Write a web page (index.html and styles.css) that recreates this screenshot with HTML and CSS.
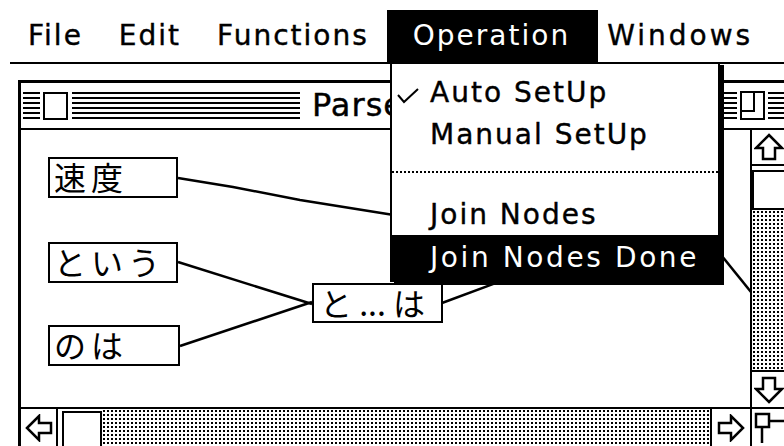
FILE: index.html
```html
<!DOCTYPE html>
<html lang="ja">
<head>
  <meta charset="UTF-8" />
  <meta name="viewport" content="width=device-width, initial-scale=1" />
  <title>Parse Tree</title>
  <link rel="stylesheet" href="styles.css">
</head>
<body>
  <div class="menubar">
    <span class="menu">File</span>
    <span class="menu">Edit</span>
    <span class="menu">Functions</span>
    <span class="menu active">Operation</span>
    <span class="menu last">Windows</span>
  </div>

  <div class="window">
    <div class="titlebar">
      <span class="stripes short"></span>
      <span class="closebox"></span>
      <span class="stripes lead"></span>
      <span class="title">Parse Tree</span>
      <span class="stripes fill"></span>
      <span class="zoombox"></span>
      <span class="stripes tail"></span>
    </div>

    <div class="pane">
      <div class="canvas">
        <!-- viewBox uses page coordinates so the links line up with the nodes -->
        <svg class="links" viewBox="21 130 729 277">
          <polyline points="178,178 233,187 300,200 400,216" />
          <polyline points="178,262 312,304" />
          <polyline points="180,346 312,302" />
          <polyline points="442,303 520,274" />
          <polyline points="700,229 760,303" />
        </svg>
        <div class="node n1">速度</div>
        <div class="node n2">という</div>
        <div class="node n3">のは</div>
        <div class="node n4">と ... は</div>
      </div>

      <div class="vscroll">
        <div class="arrow up">
          <svg width="30" height="28" viewBox="0 0 30 28"><polygon points="15,2 28,15 21,15 21,26 9,26 9,15 2,15" /></svg>
        </div>
        <div class="thumb"></div>
        <div class="track"></div>
        <div class="arrow down">
          <svg width="30" height="28" viewBox="0 0 30 28"><polygon points="15,26 28,13 21,13 21,2 9,2 9,13 2,13" /></svg>
        </div>
      </div>

      <div class="hscroll">
        <div class="arrow left">
          <svg width="28" height="28" viewBox="0 0 28 28"><polygon points="2,14 14,2 14,9 26,9 26,19 14,19 14,26" /></svg>
        </div>
        <div class="thumb"></div>
        <div class="track"></div>
        <div class="arrow right">
          <svg width="28" height="28" viewBox="0 0 28 28"><polygon points="26,14 14,2 14,9 2,9 2,19 14,19 14,26" /></svg>
        </div>
      </div>

      <div class="grow">
        <svg width="32" height="34" viewBox="0 0 32 34"><rect x="10" y="12" width="24" height="24" /><rect x="4" y="5" width="13" height="13" /></svg>
      </div>
    </div>
  </div>

  <div class="dropdown">
    <div class="item">
      <span class="mark"><svg width="22" height="16" viewBox="0 0 22 16"><polyline points="1,7 7,14 21,1" /></svg></span>
      <span>Auto SetUp</span>
    </div>
    <div class="item">
      <span class="mark"></span>
      <span>Manual SetUp</span>
    </div>
    <div class="sep"></div>
    <div class="item">
      <span class="mark"></span>
      <span>Join Nodes</span>
    </div>
    <div class="item hot">
      <span class="mark"></span>
      <span>Join Nodes Done</span>
    </div>
  </div>
</body>
</html>
```

FILE: styles.css
```css
body {
  margin: 0;
  width: 784px;
  height: 446px;
  overflow: hidden;
  position: relative;
  background: #fff;
  color: #000;
  font-family: "DejaVu Sans", sans-serif;
}

/* menu bar */
.menubar {
  display: flex;
  margin-left: 10px;
  padding-top: 10px;
  border-bottom: 2px solid #000;
  font-size: 28px;
  letter-spacing: 2px;
  -webkit-text-stroke: 0.4px #000;
}
.menu {
  height: 52px;
  line-height: 52px;
  padding: 0 18px;
}
.menu.active {
  padding: 0 28px 0 26px;
  background: #000;
  color: #fff;
  -webkit-text-stroke: 0;
}
.menu.last {
  padding-left: 9px;
  letter-spacing: 3px;
}

/* window */
.window {
  position: absolute;
  left: 18px;
  top: 80px;
  width: 771px;
  height: 392px;
  box-sizing: border-box;
  border: 3px solid #000;
  background: #fff;
  overflow: hidden;
}
.titlebar {
  display: flex;
  align-items: center;
  height: 45px;
  border-bottom: 2px solid #000;
}
.stripes {
  height: 28px;
  background: repeating-linear-gradient(#000 0 2px, #fff 2px 5px);
}
.stripes.short {
  width: 17px;
  margin-left: 2px;
}
.stripes.lead {
  width: 228px;
}
.stripes.fill {
  flex: 1;
}
.stripes.tail {
  width: 18px;
}
.closebox {
  width: 25px;
  height: 28px;
  box-sizing: border-box;
  border: 2px solid #000;
  margin: 0 4px 0 3px;
}
.zoombox {
  position: relative;
  width: 25px;
  height: 29px;
  box-sizing: border-box;
  border: 2px solid #000;
  margin: 0 3px;
}
.zoombox::after {
  content: "";
  position: absolute;
  left: 0;
  top: 0;
  width: 11px;
  height: 17px;
  border-right: 2px solid #000;
  border-bottom: 2px solid #000;
}
.title {
  padding: 0 12px;
  font-size: 32px;
  letter-spacing: 1px;
  line-height: 45px;
  -webkit-text-stroke: 0.4px #000;
}

.pane {
  display: grid;
  grid-template-columns: 729px 36px;
  grid-template-rows: 277px 39px;
}

/* tree canvas */
.canvas {
  position: relative;
  overflow: hidden;
}
.links {
  position: absolute;
  left: 0;
  top: 0;
  width: 729px;
  height: 277px;
}
.links polyline {
  fill: none;
  stroke: #000;
  stroke-width: 2.5;
}
.node {
  position: absolute;
  height: 41px;
  box-sizing: border-box;
  border: 2px solid #000;
  background: #fff;
  padding-left: 4px;
  font-family: "Noto Sans CJK JP", sans-serif;
  font-size: 32px;
  line-height: 35px;
  letter-spacing: 5px;
  white-space: nowrap;
}
.n1 { left: 27px; top: 27px; width: 130px; }
.n2 { left: 27px; top: 112px; width: 130px; }
.n3 { left: 27px; top: 195px; width: 132px; }
.n4 { left: 291px; top: 153px; width: 131px; height: 40px; padding-left: 6px; letter-spacing: 0; }

/* scroll bars */
.track {
  flex: 1;
  background: radial-gradient(circle, #000 1.1px, transparent 1.5px) 0 0 / 4px 4px;
}
.arrow {
  display: flex;
  align-items: center;
  justify-content: center;
}
.arrow polygon,
.grow rect {
  fill: #fff;
  stroke: #000;
  stroke-width: 2.5;
}
.vscroll {
  display: flex;
  flex-direction: column;
  border-left: 2px solid #000;
}
.vscroll .up {
  height: 34px;
  border-bottom: 2px solid #000;
}
.vscroll .thumb {
  height: 40px;
  box-sizing: border-box;
  margin-top: 4px;
  border: 2px solid #000;
  border-right: none;
}
.vscroll .down {
  height: 35px;
  border-top: 2px solid #000;
}
.hscroll {
  display: flex;
  border-top: 2px solid #000;
}
.hscroll .left {
  width: 35px;
  border-right: 2px solid #000;
}
.hscroll .thumb {
  width: 40px;
  box-sizing: border-box;
  margin: 2px 0 0 4px;
  border: 2px solid #000;
  border-bottom: none;
}
.hscroll .right {
  width: 38px;
  border-left: 2px solid #000;
}
.grow {
  border-top: 2px solid #000;
  border-left: 2px solid #000;
  overflow: hidden;
}

/* pulled-down menu */
.dropdown {
  position: absolute;
  left: 390px;
  top: 62px;
  width: 330px;
  box-sizing: border-box;
  border: 2px solid #000;
  padding-top: 7px;
  background: #fff;
  box-shadow: 4px 3px 0 #000;
  font-size: 28px;
  letter-spacing: 2px;
}
.item {
  display: flex;
  align-items: center;
  height: 42px;
  white-space: nowrap;
  -webkit-text-stroke: 0.4px #000;
}
.item.hot {
  height: 45px;
  background: #000;
  color: #fff;
  letter-spacing: 2.6px;
  -webkit-text-stroke: 0;
}
.mark {
  flex: none;
  width: 33px;
  padding-left: 5px;
  padding-top: 4px;
}
.mark polyline {
  fill: none;
  stroke: #000;
  stroke-width: 2;
}
.sep {
  margin: 16px 0 20px;
  border-top: 2px dotted #000;
}
```
